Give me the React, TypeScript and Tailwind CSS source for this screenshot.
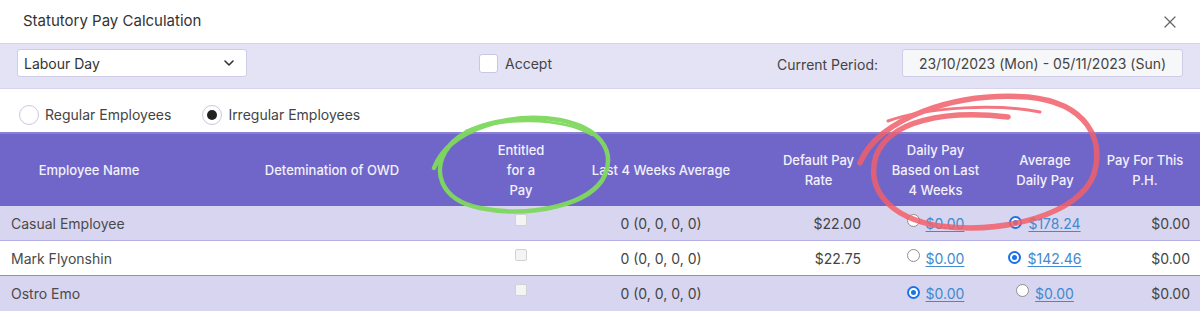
import { ChevronDown, X } from 'lucide-react';

type Pick = 'daily' | 'avg';

const rows: { name: string; avg4: string; rate: string; daily: string; average: string; pick: Pick; ph: string }[] = [
  { name: 'Casual Employee', avg4: '0 (0, 0, 0, 0)', rate: '$22.00', daily: '$0.00', average: '$178.24', pick: 'avg', ph: '$0.00' },
  { name: 'Mark Flyonshin', avg4: '0 (0, 0, 0, 0)', rate: '$22.75', daily: '$0.00', average: '$142.46', pick: 'avg', ph: '$0.00' },
  { name: 'Ostro Emo', avg4: '0 (0, 0, 0, 0)', rate: '', daily: '$0.00', average: '$0.00', pick: 'daily', ph: '$0.00' },
];

function Radio({ on }: { on: boolean }) {
  return on ? (
    <span className="inline-flex h-[13px] w-[13px] items-center justify-center rounded-full bg-[#1a73e8]">
      <span className="h-[9px] w-[9px] rounded-full border-2 border-white bg-[#1a73e8]" />
    </span>
  ) : (
    <span className="inline-block h-[13px] w-[13px] rounded-full border border-[#8f8f8f] bg-white" />
  );
}

function PayCell({ on, value }: { on: boolean; value: string }) {
  return (
    <div className="flex items-center justify-center gap-[6px]">
      <span className="-mt-[4px]">
        <Radio on={on} />
      </span>
      <span className="text-[#4289cf] underline underline-offset-2">{value}</span>
    </div>
  );
}

export default function App() {
  return (
    <div className="relative h-[322px] w-[1200px] overflow-hidden bg-white font-['Inter',sans-serif] text-[14px] text-[#444]">
      <div className="flex h-[43px] items-center justify-between pl-[23px] pr-[20px]">
        <h1 className="text-[15px] text-[#333]">Statutory Pay Calculation</h1>
        <X className="h-[20px] w-[20px] text-[#666]" strokeWidth={1.5} />
      </div>

      <div className="flex h-[46px] items-start border-y border-[#d6d3ee] bg-[#e4e2f5] pl-[17px] pr-[17px] pt-[5px]">
        <div className="flex h-[28px] w-[230px] items-center justify-between rounded-[3px] border border-[#cfcce8] bg-white pl-[6px] pr-[9px] text-[#333]">
          <span>Labour Day</span>
          <ChevronDown className="h-[16px] w-[16px] text-[#333]" strokeWidth={2.4} />
        </div>
        <div className="ml-[232px] flex h-[28px] items-center gap-[7px]">
          <span className="h-[19px] w-[19px] rounded-[3px] border border-[#c9c6e2] bg-white" />
          <span>Accept</span>
        </div>
        <span className="ml-auto mr-[24px] flex h-[30px] items-center">Current Period:</span>
        <div className="flex h-[28px] w-[281px] items-center justify-center rounded-[3px] border border-[#cfcce8] bg-[#f6f7f9] text-[#444]">
          23/10/2023 (Mon) - 05/11/2023 (Sun)
        </div>
      </div>

      <div className="flex h-[43px] items-center gap-[6px] pl-[19px] pt-[8px]">
        <span className="h-[20px] w-[20px] rounded-full border border-[#c9c6e2] bg-white" />
        <span className="mr-[25px]">Regular Employees</span>
        <span className="flex h-[20px] w-[20px] items-center justify-center rounded-full border border-[#c9c6e2] bg-white">
          <span className="h-[10px] w-[10px] rounded-full bg-[#222]" />
        </span>
        <span>Irregular Employees</span>
      </div>

      <div className="grid grid-cols-[178px_308px_70px_210px_105px_129px_90px_110px] border-t-2 border-[#8a80d6]">
        <div className="flex h-[72px] items-center justify-center bg-[#7066c9] text-center text-[13px] font-medium leading-[20px] text-[#f2f1fb]">Employee Name</div>
        <div className="flex h-[72px] items-center justify-center bg-[#7066c9] text-center text-[13px] font-medium leading-[20px] text-[#f2f1fb]">Detemination of OWD</div>
        <div className="flex h-[72px] items-center justify-center bg-[#7066c9] text-center text-[13px] font-medium leading-[20px] text-[#f2f1fb]">
          Entitled<br />for a<br />Pay
        </div>
        <div className="flex h-[72px] items-center justify-center bg-[#7066c9] text-center text-[13px] font-medium leading-[20px] text-[#f2f1fb]">Last 4 Weeks Average</div>
        <div className="flex h-[72px] items-center justify-center bg-[#7066c9] text-center text-[13px] font-medium leading-[20px] text-[#f2f1fb]">
          Default Pay<br />Rate
        </div>
        <div className="flex h-[72px] items-center justify-center bg-[#7066c9] text-center text-[13px] font-medium leading-[20px] text-[#f2f1fb]">
          Daily Pay<br />Based on Last<br />4 Weeks
        </div>
        <div className="flex h-[72px] items-center justify-center bg-[#7066c9] text-center text-[13px] font-medium leading-[20px] text-[#f2f1fb]">
          Average<br />Daily Pay
        </div>
        <div className="flex h-[72px] items-center justify-center bg-[#7066c9] text-center text-[13px] font-medium leading-[20px] text-[#f2f1fb]">
          Pay For This<br />P.H.
        </div>

        {rows.map((r, i) => {
          const bg = i % 2 === 0 ? 'bg-[#d8d5f0]' : 'bg-white';
          const line = i === 0 ? 'border-[#b4aee6]' : i === 1 ? 'border-[#8f86d8]' : 'border-[#d8d5f0]';
          const cell = `flex h-[35px] items-center border-b ${line} ${bg}`;
          return (
            <div key={r.name} className="contents">
              <div className={`${cell} pl-[11px] text-[#4a4a4a]`}>{r.name}</div>
              <div className={cell} />
              <div className={`${cell} justify-center`}>
                <span className="-mt-[6px] h-[12px] w-[12px] rounded-[2px] border border-[#d2d2d2] bg-[#f4f4f5]" />
              </div>
              <div className={`${cell} justify-center`}>{r.avg4}</div>
              <div className={`${cell} justify-end pr-[10px]`}>{r.rate}</div>
              <div className={cell + ' justify-center'}>
                <PayCell on={r.pick === 'daily'} value={r.daily} />
              </div>
              <div className={cell + ' justify-center'}>
                <PayCell on={r.pick === 'avg'} value={r.average} />
              </div>
              <div className={`${cell} justify-end pr-[10px]`}>{r.ph}</div>
            </div>
          );
        })}
      </div>

      {/* hand drawn annotations */}
      <svg className="pointer-events-none absolute left-0 top-0" width="1200" height="322" viewBox="0 0 1200 322" fill="none">
        <g stroke="#7fd95e" strokeLinecap="round" opacity="0.95">
          <path d="M 434 168 C 450 128, 510 112, 560 120 C 600 128, 615 150, 605 175 C 592 205, 530 218, 480 208 C 440 200, 430 170, 450 145 C 470 122, 520 116, 545 119" strokeWidth="4.5" />
          <path d="M 466 131 C 500 118, 560 116, 592 135" strokeWidth="2.5" />
        </g>
        <g stroke="#f2606a" strokeLinecap="round" opacity="0.85">
          <path d="M 860 163 C 878 118, 955 92, 1028 97 C 1088 103, 1104 140, 1094 174 C 1080 214, 1005 234, 940 226 C 888 218, 866 188, 876 156 C 890 120, 945 110, 1008 117" strokeWidth="5.5" />
          <path d="M 888 121 C 930 106, 1000 104, 1040 112" strokeWidth="3" />
        </g>
      </svg>
    </div>
  );
}
